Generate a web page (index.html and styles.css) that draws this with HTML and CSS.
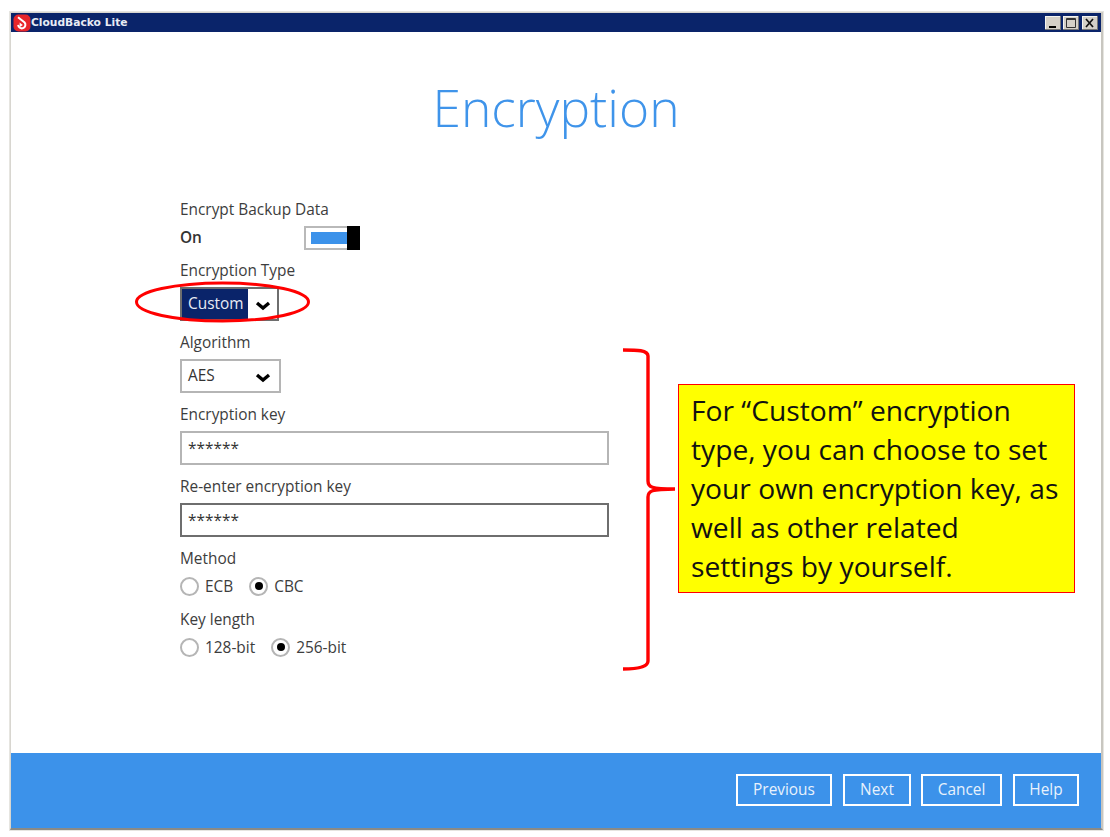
FILE: index.html
```html
<!DOCTYPE html>
<html lang="en">
<head>
<meta charset="utf-8">
<title>CloudBacko Lite - Encryption</title>
<link rel="stylesheet" href="styles.css">
</head>
<body>
<div class="window">
  <header class="titlebar">
    <svg class="logo" width="18" height="18" viewBox="0 0 18 18"><rect x="0.5" y="0.5" width="17" height="17" rx="5" fill="#e8262a"/><path d="M5 3.2l6.6 5.3a3.6 3.6 0 1 1-6.4 2.4" fill="none" stroke="#fff" stroke-width="2"/><path d="M6.6 8.6l3.2 2.4-3.2 2.2z" fill="#fff"/></svg>
    <span class="app-name">CloudBacko Lite</span>
    <div class="win-buttons">
      <span class="win-btn"><svg width="16" height="14" viewBox="0 0 16 14"><rect x="4" y="10" width="7" height="2" fill="#000"/></svg></span>
      <span class="win-btn"><svg width="16" height="14" viewBox="0 0 16 14"><path d="M3.5 2.5h9v9h-9z M3.5 3.5h9" fill="none" stroke="#333"/></svg></span>
      <span class="win-btn win-gap"><svg width="16" height="14" viewBox="0 0 16 14"><path d="M4 3l7 8M11 3l-7 8" stroke="#111" stroke-width="1.7"/></svg></span>
    </div>
  </header>
  <main class="content">
    <h1 class="page-title">Encryption</h1>
    <form class="form">
      <div class="label first">Encrypt Backup Data</div>
      <div class="toggle-row">
        <span class="on">On</span>
        <span class="toggle"><span class="toggle-fill"></span><span class="toggle-knob"></span></span>
      </div>
      <div class="label l-type">Encryption Type</div>
      <div class="select select-custom"><span class="sel-text selected">Custom</span><svg class="chev" width="16" height="10" viewBox="0 0 16 10"><path d="M2 2l6 5 6-5" fill="none" stroke="#000" stroke-width="3.4"/></svg></div>
      <div class="label l-algo">Algorithm</div>
      <div class="select select-aes"><span class="sel-text">AES</span><svg class="chev" width="16" height="10" viewBox="0 0 16 10"><path d="M2 2l6 5 6-5" fill="none" stroke="#000" stroke-width="3.4"/></svg></div>
      <div class="label l-key">Encryption key</div>
      <div class="input">******</div>
      <div class="label l-rekey">Re-enter encryption key</div>
      <div class="input input-focus">******</div>
      <div class="label l-method">Method</div>
      <div class="radios">
        <span class="radio"></span><span class="radio-text">ECB</span>
        <span class="radio checked"></span><span class="radio-text">CBC</span>
      </div>
      <div class="label l-len">Key length</div>
      <div class="radios">
        <span class="radio"></span><span class="radio-text">128-bit</span>
        <span class="radio checked"></span><span class="radio-text">256-bit</span>
      </div>
    </form>
  </main>
  <footer class="footer">
    <span class="btn btn-prev">Previous</span>
    <span class="btn btn-next">Next</span>
    <span class="btn btn-cancel">Cancel</span>
    <span class="btn btn-help">Help</span>
  </footer>
</div>

<svg class="ellipse" width="180" height="46" viewBox="0 0 180 46"><ellipse cx="89.5" cy="23" rx="86" ry="19" fill="none" stroke="#f00" stroke-width="3"/></svg>
<svg class="brace" width="56" height="326" viewBox="0 0 56 326"><path d="M0 2c14 0 25 0 25 6v125c0 6 3 8 27 8c-24 0-27 2-27 8v164c0 6-11 8-25 8" fill="none" stroke="#f00" stroke-width="3.4"/></svg>
<aside class="note">For “Custom” encryption type, you can choose to set your own encryption key, as well as other related settings by yourself.</aside>
</body>
</html>
```
FILE: styles.css
```css
* { box-sizing: border-box; }
html, body { margin: 0; padding: 0; }
body {
  width: 1110px;
  height: 837px;
  background: #fff;
  font-family: "Open Sans", sans-serif;
  color: #333;
  overflow: hidden;
  position: relative;
}
.window {
  margin: 12px 0 0 10px;
  width: 1093px;
  height: 818px;
  display: flex;
  flex-direction: column;
  border: 1px solid #d8d6d0;
  border-right: 2px solid #c8c6c0;
  border-bottom: 2px solid #8a8a86;
  outline: 1px solid #e6e5e0;
}
.titlebar {
  height: 19px;
  flex: none;
  background: #0a246a;
  display: flex;
  align-items: center;
  padding-left: 2px;
  color: #fff;
}
.logo { flex: none; }
.app-name {
  font-family: "DejaVu Sans", sans-serif;
  font-weight: 700;
  font-size: 10.7px;
  margin-left: 0;
  color: #e8ebf4;
}
.win-buttons { margin-left: auto; display: flex; gap: 2px; margin-right: 3px; }
.win-btn {
  width: 16px;
  height: 14px;
  background: #d4d0c8;
  display: block;
  box-shadow: inset -1px -1px 0 #777, inset 1px 1px 0 #f4f4f0;
}
.win-gap { margin-left: 1px; }
.win-btn svg { display: block; }
.content { flex: 1; min-height: 0; display: flex; flex-direction: column; background: #fff; }
.page-title {
  margin: 39px 0 0;
  text-align: center;
  font-weight: 300;
  font-size: 51.5px;
  line-height: 72px;
  color: #3f94ea;
}
.form { margin: 56px 0 0 169px; width: 429px; }
.label { font-size: 15.4px; line-height: 20px; padding-top: 1px; color: #3d3d3d; }
.toggle-row { display: flex; align-items: center; height: 24px; margin-top: 6px; }
.on { font-size: 15.4px; font-weight: 600; color: #333; width: 124px; margin-bottom: 2px; }
.toggle {
  display: flex;
  width: 56px;
  height: 24px;
  border: 2px solid #b9b9b9;
  border-right: 0;
  position: relative;
  padding: 4px 12px 4px 5px;
}
.toggle-fill { flex: 1; background: #3c92ea; }
.toggle-knob { position: absolute; right: 0; top: -2px; width: 13px; height: 24px; background: #000; }
.l-type { margin-top: 10px; }
.select {
  display: flex;
  align-items: center;
  height: 34px;
  margin-top: 6px;
  border: 2px solid #b5b5b5;
  font-size: 15.4px;
  color: #333;
}
.select-custom { width: 99px; border-color: #6e6e6e; }
.select-aes { width: 101px; }
.sel-text { padding-left: 6px; height: 100%; line-height: 29px; }
.selected { background: #0a246a; color: #e8ebf4; width: 66px; flex: none; }
.select-aes .sel-text { width: 66px; flex: none; }
.chev { margin-left: 7px; margin-top: 4px; }
.l-algo { margin-top: 11px; }
.l-key { margin-top: 11px; }
.l-rekey { margin-top: 11px; }
.input {
  height: 34px;
  margin-top: 6px;
  border: 2px solid #b5b5b5;
  padding-left: 6px;
  font-size: 15.4px;
  line-height: 31px;
  color: #333;
}
.input-focus { border-color: #6e6e6e; }
.l-method { margin-top: 11px; }
.radios { display: flex; align-items: center; height: 20px; margin-top: 7px; font-size: 15.4px; color: #3d3d3d; }
.radio {
  width: 19px;
  height: 19px;
  border-radius: 50%;
  border: 2px solid #b5b5b5;
  background: #fff;
  position: relative;
  flex: none;
}
.radio.checked::after {
  content: "";
  position: absolute;
  left: 3.5px;
  top: 3.5px;
  width: 8px;
  height: 8px;
  border-radius: 50%;
  background: #000;
}
.radio-text { margin-left: 6px; margin-right: 16px; }
.l-len { margin-top: 13px; }
.footer {
  height: 75px;
  flex: none;
  background: #3c92ea;
  display: flex;
  align-items: center;
  justify-content: flex-end;
  padding: 0 22px 2px 0;
}
.btn {
  height: 32px;
  border: 2px solid #fff;
  color: #e8f1fc;
  font-size: 15.4px;
  line-height: 28px;
  text-align: center;
  margin-left: 11px;
}
.btn-prev { width: 96px; }
.btn-next { width: 68px; }
.btn-cancel { width: 81px; margin-left: 10px; }
.btn-help { width: 66px; }
.ellipse { position: absolute; left: 133px; top: 279px; }
.brace { position: absolute; left: 623px; top: 348px; }
.note {
  position: absolute;
  left: 678px;
  top: 384px;
  width: 397px;
  height: 209px;
  background: #ff0;
  border: 1px solid #f00;
  padding: 6px 8px 0 12px;
  font-size: 28.2px;
  line-height: 39px;
  color: #111;
}
```
